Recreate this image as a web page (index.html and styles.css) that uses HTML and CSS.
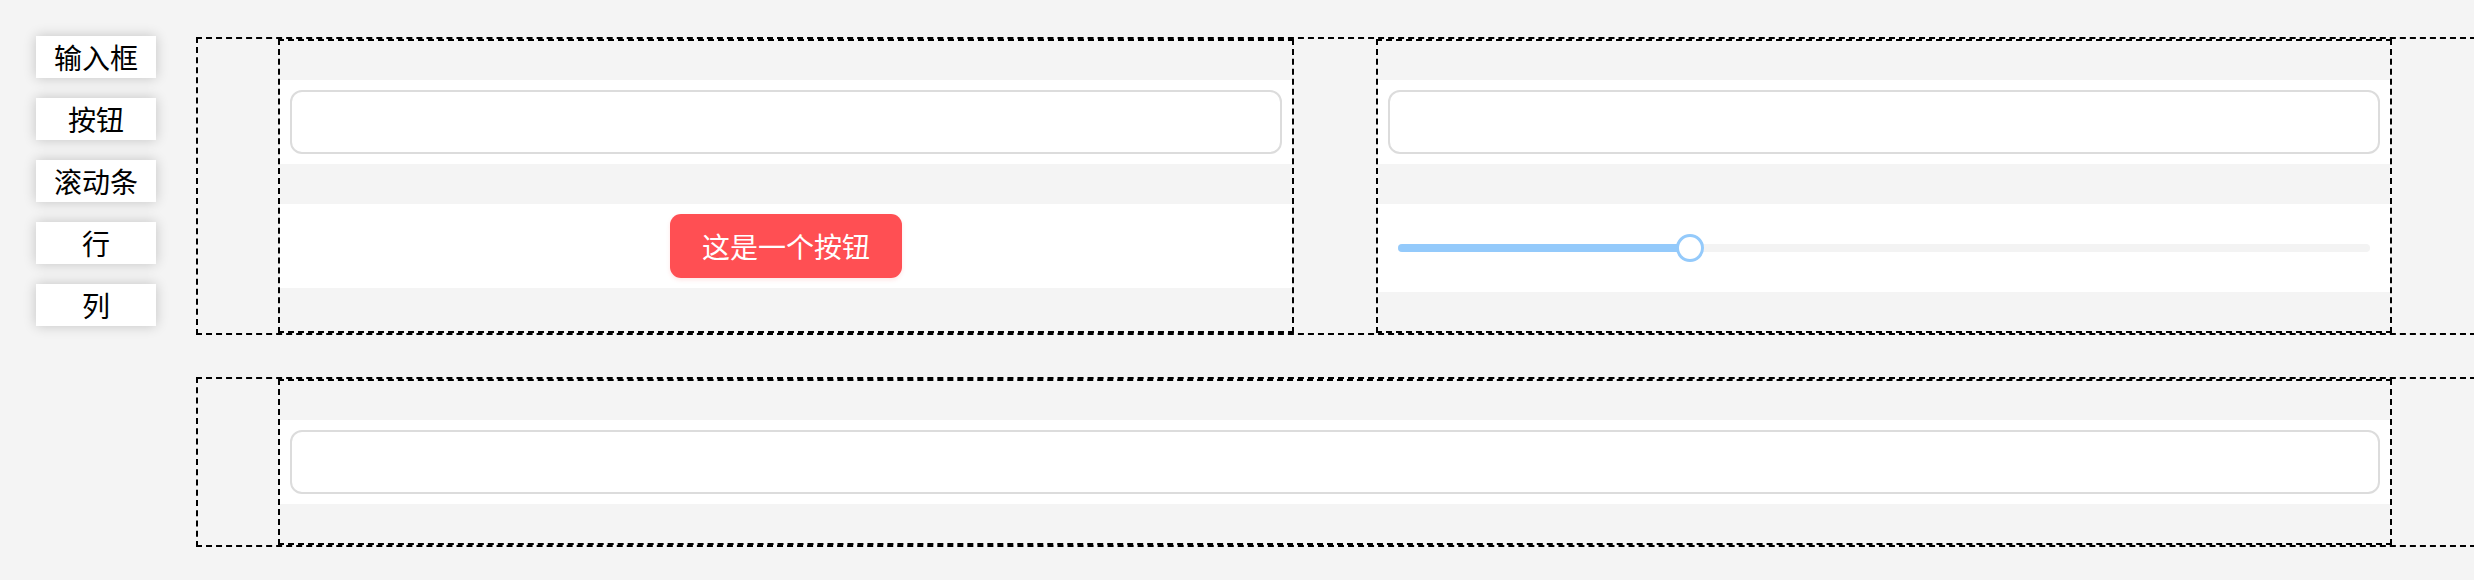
FILE: index.html
```html
<!DOCTYPE html>
<html lang="zh">
<head>
<meta charset="utf-8">
<title>布局</title>
<link rel="stylesheet" href="styles.css">
</head>
<body>
<div class="page">
  <nav class="side">
    <div class="side-btn">输入框</div>
    <div class="side-btn">按钮</div>
    <div class="side-btn">滚动条</div>
    <div class="side-btn">行</div>
    <div class="side-btn">列</div>
  </nav>
  <main class="main">
    <div class="row">
      <div class="col">
        <div class="band"><input class="field" type="text"></div>
        <div class="band band-center"><button class="btn">这是一个按钮</button></div>
      </div>
      <div class="col">
        <div class="band"><input class="field" type="text"></div>
        <div class="band band-slider">
          <div class="slider">
            <div class="slider-fill" style="width: 30%"></div>
            <div class="slider-thumb" style="left: 30%"></div>
          </div>
        </div>
      </div>
    </div>
    <div class="row row-full">
      <div class="col">
        <div class="band"><input class="field" type="text"></div>
      </div>
    </div>
  </main>
</div>
</body>
</html>
```

FILE: styles.css
```css
* { box-sizing: border-box; }
html, body {
  margin: 0;
  padding: 0;
  background: #f4f4f4;
  overflow: hidden;
  font-family: "Noto Sans CJK SC", "Noto Sans", sans-serif;
}
.page {
  display: flex;
  align-items: flex-start;
  width: 2474px;
}
.side {
  display: flex;
  flex-direction: column;
  gap: 20px;
  margin: 36px 0 0 36px;
  width: 120px;
  flex-shrink: 0;
}
.side-btn {
  height: 42px;
  background: #fff;
  box-shadow: 0 0 12px rgba(0, 0, 0, 0.2);
  font-size: 28px;
  line-height: 42px;
  text-align: center;
  color: #000;
}
.main {
  margin: 37px 0 0 40px;
  flex-shrink: 0;
  width: 2280px;
}
.row {
  border: 2px dashed #000;
  padding: 0 82px 0 80px;
  display: grid;
  grid-template-columns: 1016px 1016px;
  column-gap: 82px;
}
.row-full {
  margin-top: 42px;
  grid-template-columns: 2114px;
}
.col {
  border: 2px dashed #000;
  padding: 39px 0;
  display: flex;
  flex-direction: column;
  gap: 40px;
}
.band {
  background: #fff;
  padding: 10px;
}
.band-center {
  display: flex;
  justify-content: center;
}
.field {
  display: block;
  width: 100%;
  height: 64px;
  margin: 0;
  border: 2px solid #dcdcdc;
  border-radius: 12px;
  background: #fff;
  outline: none;
}
.btn {
  width: 232px;
  height: 64px;
  border: none;
  border-radius: 11px;
  background: #ff4f53;
  color: #fff;
  font-family: "Noto Sans CJK SC", "Noto Sans", sans-serif;
  font-size: 28px;
  box-shadow: 0 2px 4px rgba(255, 79, 83, 0.15);
  padding: 0;
}
.band-slider {
  height: 88px;
  padding: 0 20px;
  display: flex;
  align-items: center;
}
.slider {
  position: relative;
  width: 100%;
  height: 8px;
  border-radius: 4px;
  background: #f3f3f3;
}
.slider-fill {
  height: 100%;
  border-radius: 4px;
  background: #94cafb;
}
.slider-thumb {
  position: absolute;
  top: 50%;
  width: 28px;
  height: 28px;
  margin: -14px 0 0 -14px;
  border-radius: 50%;
  background: #fff;
  border: 3px solid #94cafb;
}
```
